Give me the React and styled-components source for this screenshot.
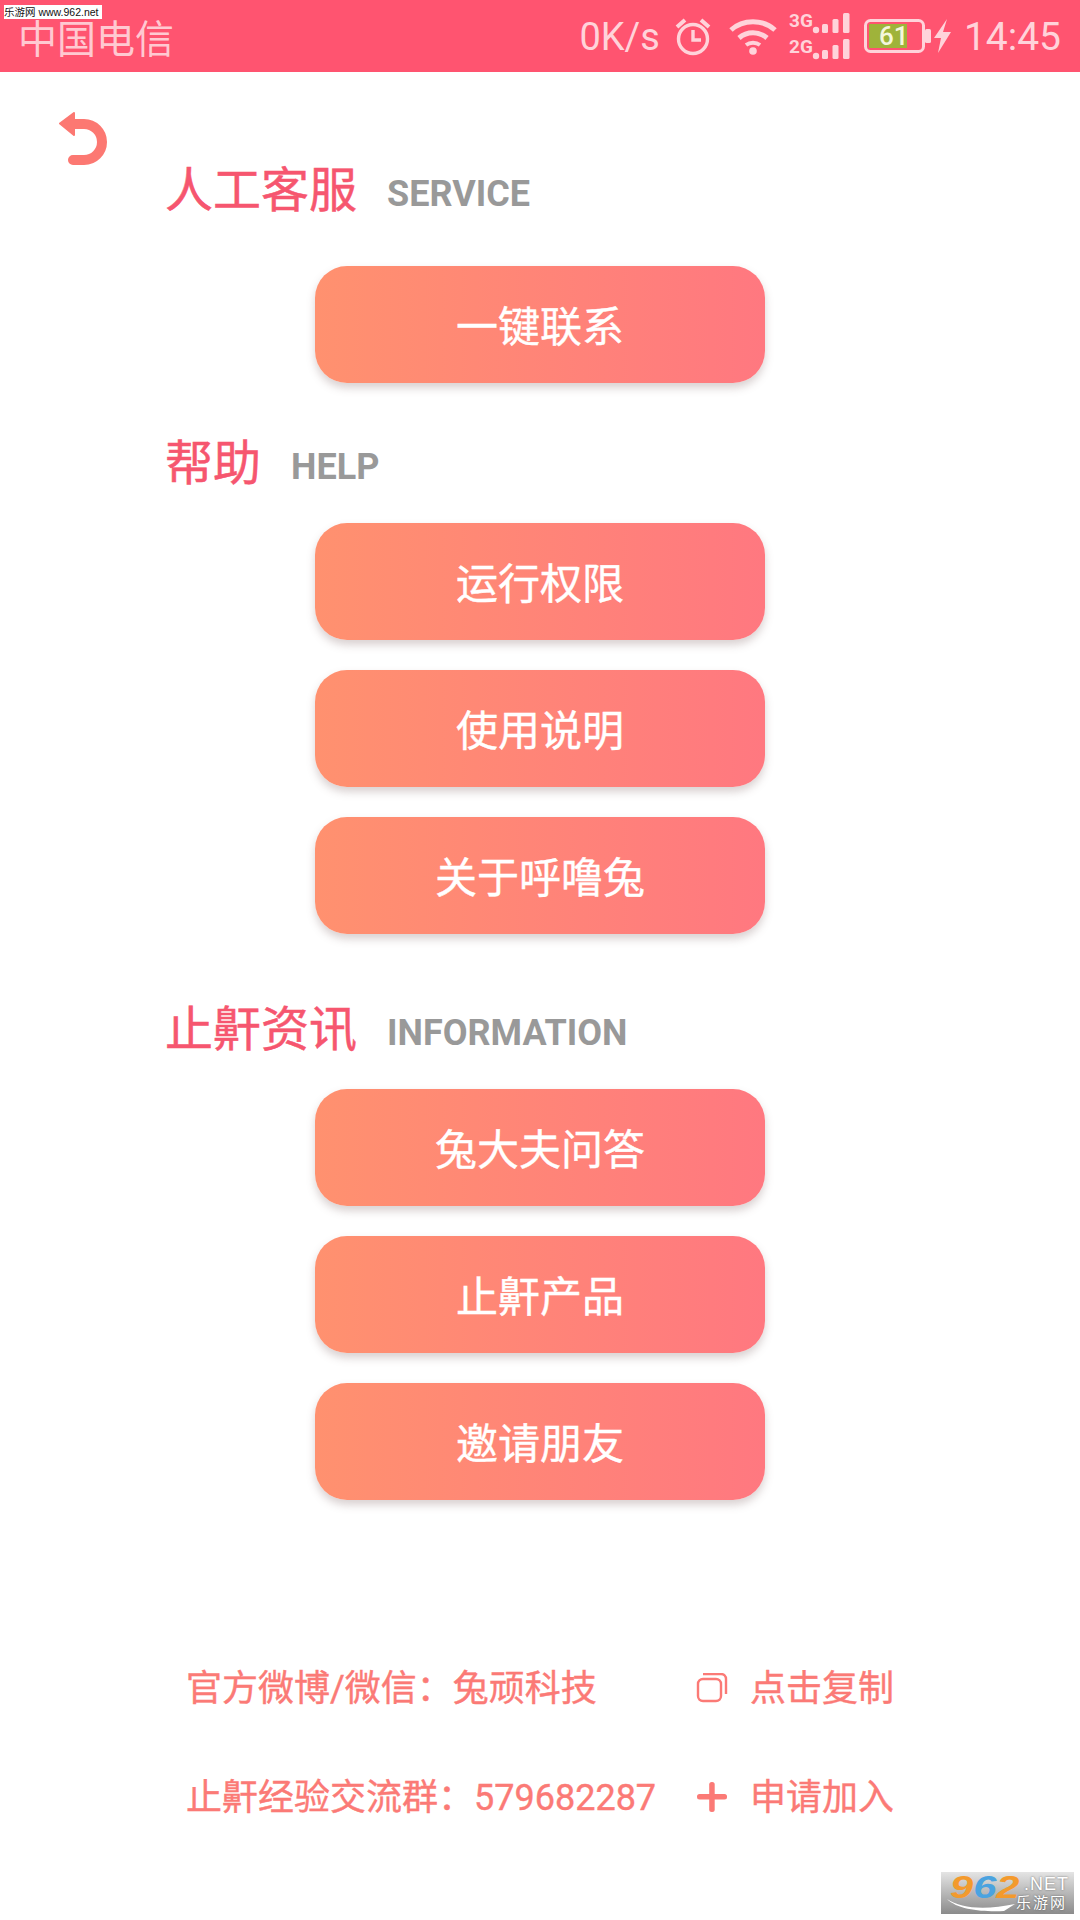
import React from "react";
import styled, { createGlobalStyle } from "styled-components";

const CJK = `"Noto Sans CJK SC", sans-serif`;
const LATIN_CJK = `Roboto, "Noto Sans CJK SC", sans-serif`;

const GlobalStyle = createGlobalStyle`
  html, body {
    margin: 0;
    padding: 0;
    background: #fff;
  }
`;

const Page = styled.div`
  position: relative;
  width: 1080px;
  height: 1920px;
  overflow: hidden;
  background: #fff;
  font-family: ${CJK};
`;

const StatusBar = styled.div`
  display: flex;
  align-items: center;
  justify-content: space-between;
  height: 72px;
  padding: 0 19px 0 18px;
  box-sizing: border-box;
  background: #ff5470;
  color: #ffd3da;
`;

const Carrier = styled.div`
  font-size: 39px;
  font-weight: 400;
  line-height: 72px;
  opacity: 0.92;
`;

const StatusRight = styled.div`
  display: flex;
  align-items: center;
`;

const Speed = styled.span`
  font-family: Roboto, sans-serif;
  font-size: 38px;
  font-weight: 400;
  margin-right: 15px;
  padding-top: 2px;
`;

const Clock = styled.span`
  font-family: Roboto, sans-serif;
  font-size: 39px;
  font-weight: 400;
  margin-left: 13px;
  padding-top: 2px;
`;

const StatusIcon = styled.svg`
  display: block;
  margin-left: ${(props) => props.$gap || 0}px;
  fill: none;
  stroke: #ffd3da;
`;

const NetLabel = styled.text`
  font-family: Roboto, sans-serif;
  font-size: 19px;
  font-weight: 700;
  fill: #ffd3da;
  stroke: none;
`;

const BatteryLabel = styled.text`
  font-family: Roboto, sans-serif;
  font-size: 26px;
  font-weight: 500;
  fill: #f4f7dc;
  stroke: none;
`;

const Watermark = styled.div`
  position: absolute;
  left: 4px;
  top: 5px;
  width: 98px;
  height: 14px;
  background: #fff;
  color: #111;
  font-family: "Liberation Sans", ${CJK};
  font-size: 10.5px;
  line-height: 14px;
  white-space: nowrap;
  overflow: hidden;
`;

const Content = styled.div`
  display: flex;
  flex-direction: column;
`;

const BackButton = styled.svg`
  display: block;
  width: 50px;
  height: 56px;
  margin: 40px 0 -8px 59px;
`;

const SectionHead = styled.div`
  display: flex;
  align-items: center;
  height: 60px;
  padding-left: 165px;
  margin-top: ${(props) => props.$top}px;
  margin-bottom: ${(props) => props.$bottom}px;
`;

const Title = styled.h2`
  margin: -12px 0 0;
  color: #f6566f;
  font-size: 48px;
  font-weight: 400;
  -webkit-text-stroke: 0.5px #f6566f;
  line-height: 60px;
`;

const Subtitle = styled.span`
  margin-left: 30px;
  color: #999;
  font-family: Roboto, sans-serif;
  font-size: 36px;
  font-weight: 700;
  padding-top: 4px;
`;

const ButtonStack = styled.div`
  display: flex;
  flex-direction: column;
  align-items: center;
  gap: 30px;
`;

const ActionButton = styled.button`
  width: 450px;
  height: 117px;
  padding: 0 0 2px;
  border: 0;
  border-radius: 32px;
  background: linear-gradient(90deg, #ff916f, #ff7880);
  box-shadow: 0 5px 8px rgba(120, 90, 90, 0.28);
  color: #fff;
  font-family: ${CJK};
  font-size: 42px;
  font-weight: 400;
  -webkit-text-stroke: 0.4px #fff;
`;

const Footer = styled.div`
  display: flex;
  flex-direction: column;
  gap: 69px;
  margin-top: 169px;
  padding-left: 186px;
`;

const FooterRow = styled.div`
  display: flex;
  align-items: center;
  height: 40px;
  color: #fb7a76;
  font-family: ${LATIN_CJK};
  font-size: 36px;
  font-weight: 400;
  -webkit-text-stroke: 0.4px #fb7a76;
  line-height: 40px;
  white-space: nowrap;
`;

const FooterLabel = styled.span`
  width: 510px;
`;

const FooterIcon = styled.svg`
  display: block;
  width: 32px;
  height: 32px;
  margin-right: 22px;
`;

const SiteLogo = styled.div`
  position: absolute;
  right: 6px;
  bottom: 6px;
  width: 133px;
  height: 42px;
  background: linear-gradient(180deg, #e4e4e4, #8b8b8b);
`;

const LogoDigits = styled.div`
  position: absolute;
  left: 9px;
  top: 0;
  font-family: "Liberation Sans", sans-serif;
  font-size: 32px;
  font-style: italic;
  font-weight: 700;
  line-height: 30px;
  color: #f39a2d;
  transform: scaleX(1.3);
  transform-origin: left top;
`;

const LogoSix = styled.span`
  color: #4aa3e0;
`;

const LogoNet = styled.div`
  position: absolute;
  right: 5px;
  top: 3px;
  font-family: "Liberation Sans", sans-serif;
  font-size: 18px;
  line-height: 18px;
  letter-spacing: 1px;
  color: #fff;
  text-shadow: 0 0 2px #666;
`;

const LogoName = styled.div`
  position: absolute;
  right: 7px;
  top: 21px;
  font-size: 15px;
  line-height: 18px;
  letter-spacing: 2px;
  color: #fff;
  text-shadow: 0 0 2px #555;
`;

const LogoSwoosh = styled.svg`
  position: absolute;
  left: 5px;
  bottom: 2px;
`;

const SECTIONS = [
  { title: "人工客服", sub: "SERVICE", top: 2, bottom: 44, items: ["一键联系"] },
  { title: "帮助", sub: "HELP", top: 52, bottom: 28, items: ["运行权限", "使用说明", "关于呼噜兔"] },
  { title: "止鼾资讯", sub: "INFORMATION", top: 67, bottom: 28, items: ["兔大夫问答", "止鼾产品", "邀请朋友"] },
];

const SignalBars = ({ y }) => (
  <g fill="#ffd3da" stroke="none">
    <circle cx="27" cy={y + 18} r="3.2" />
    <rect x="33" y={y + 12} width="6" height="9" rx="1.5" />
    <rect x="43.5" y={y + 7} width="6" height="14" rx="1.5" />
    <rect x="54" y={y + 1} width="6.5" height="20" rx="1.5" />
  </g>
);

const StatusIcons = () => (
  <>
    <StatusIcon width="36" height="40" viewBox="0 0 36 40" strokeWidth="3.4">
      <circle cx="18" cy="23" r="14.5" />
      <path d="M18 14v10h8" />
      <path d="M2 11l8-7M34 11l-8-7" strokeWidth="4" />
    </StatusIcon>
    <StatusIcon $gap={17} width="50" height="38" viewBox="0 0 50 38" strokeWidth="5">
      <path d="M3 13c12-11 32-11 44 0" />
      <path d="M11 21c8-7 20-7 28 0" />
      <path d="M18 28c4-3 10-3 14 0" strokeWidth="4" />
      <circle cx="25" cy="34" r="3.8" fill="#ffd3da" stroke="none" />
    </StatusIcon>
    <StatusIcon $gap={11} width="61" height="48" viewBox="0 0 61 48">
      <NetLabel x="0" y="15">3G</NetLabel>
      <NetLabel x="0" y="41">2G</NetLabel>
      <SignalBars y={0} />
      <SignalBars y={26} />
    </StatusIcon>
    <StatusIcon $gap={14} width="67" height="34" viewBox="0 0 67 34">
      <rect x="1.5" y="1.5" width="58" height="31" rx="5" strokeWidth="3" />
      <rect x="5" y="5" width="38" height="24" fill="#9fb33a" stroke="none" />
      <rect x="61" y="10" width="6" height="14" rx="1.5" fill="#ffd3da" stroke="none" />
      <BatteryLabel x="15" y="26">61</BatteryLabel>
    </StatusIcon>
    <StatusIcon $gap={3} width="17" height="34" viewBox="0 0 17 34">
      <path d="M13 0L0 19h7L4 34l13-21H9z" fill="#ffd3da" stroke="none" />
    </StatusIcon>
  </>
);

const BackIcon = () => (
  <BackButton viewBox="0 0 50 56" fill="none">
    <path d="M13 12H25a18 18 0 0 1 0 36H14" stroke="#fc7872" strokeWidth="10" strokeLinecap="round" />
    <path d="M15 1v22L1 11.5z" fill="#fc7872" stroke="#fc7872" strokeWidth="2" strokeLinejoin="round" />
  </BackButton>
);

const CopyIcon = () => (
  <FooterIcon viewBox="0 2 32 32" fill="none" stroke="#fb7a76" strokeWidth="2.4">
    <rect x="2" y="8" width="23" height="22" rx="5" />
    <path d="M7 3H25a5 5 0 0 1 5 5V23" />
  </FooterIcon>
);

const PlusIcon = () => (
  <FooterIcon viewBox="0 1 32 32" fill="#fb7a76">
    <rect x="1" y="13" width="30" height="5.5" rx="2.5" />
    <rect x="13.2" y="1" width="5.5" height="30" rx="2.5" />
  </FooterIcon>
);

export default function App() {
  return (
    <Page>
      <GlobalStyle />
      <StatusBar>
        <Carrier>中国电信</Carrier>
        <StatusRight>
          <Speed>0K/s</Speed>
          <StatusIcons />
          <Clock>14:45</Clock>
        </StatusRight>
      </StatusBar>
      <Watermark>乐游网 www.962.net</Watermark>
      <Content>
        <BackIcon />
        {SECTIONS.map((section) => (
          <React.Fragment key={section.title}>
            <SectionHead $top={section.top} $bottom={section.bottom}>
              <Title>{section.title}</Title>
              <Subtitle>{section.sub}</Subtitle>
            </SectionHead>
            <ButtonStack>
              {section.items.map((item) => (
                <ActionButton key={item}>{item}</ActionButton>
              ))}
            </ButtonStack>
          </React.Fragment>
        ))}
        <Footer>
          <FooterRow>
            <FooterLabel>官方微博/微信：兔顽科技</FooterLabel>
            <CopyIcon />
            点击复制
          </FooterRow>
          <FooterRow>
            <FooterLabel>止鼾经验交流群：579682287</FooterLabel>
            <PlusIcon />
            申请加入
          </FooterRow>
        </Footer>
      </Content>
      <SiteLogo>
        <LogoSwoosh width="70" height="14" viewBox="0 0 70 14">
          <path d="M1 1c14 10 40 11 68 5L58 13C38 14 12 12 1 1z" fill="#fff" />
        </LogoSwoosh>
        <LogoDigits>9<LogoSix>6</LogoSix>2</LogoDigits>
        <LogoNet>.NET</LogoNet>
        <LogoName>乐游网</LogoName>
      </SiteLogo>
    </Page>
  );
}
